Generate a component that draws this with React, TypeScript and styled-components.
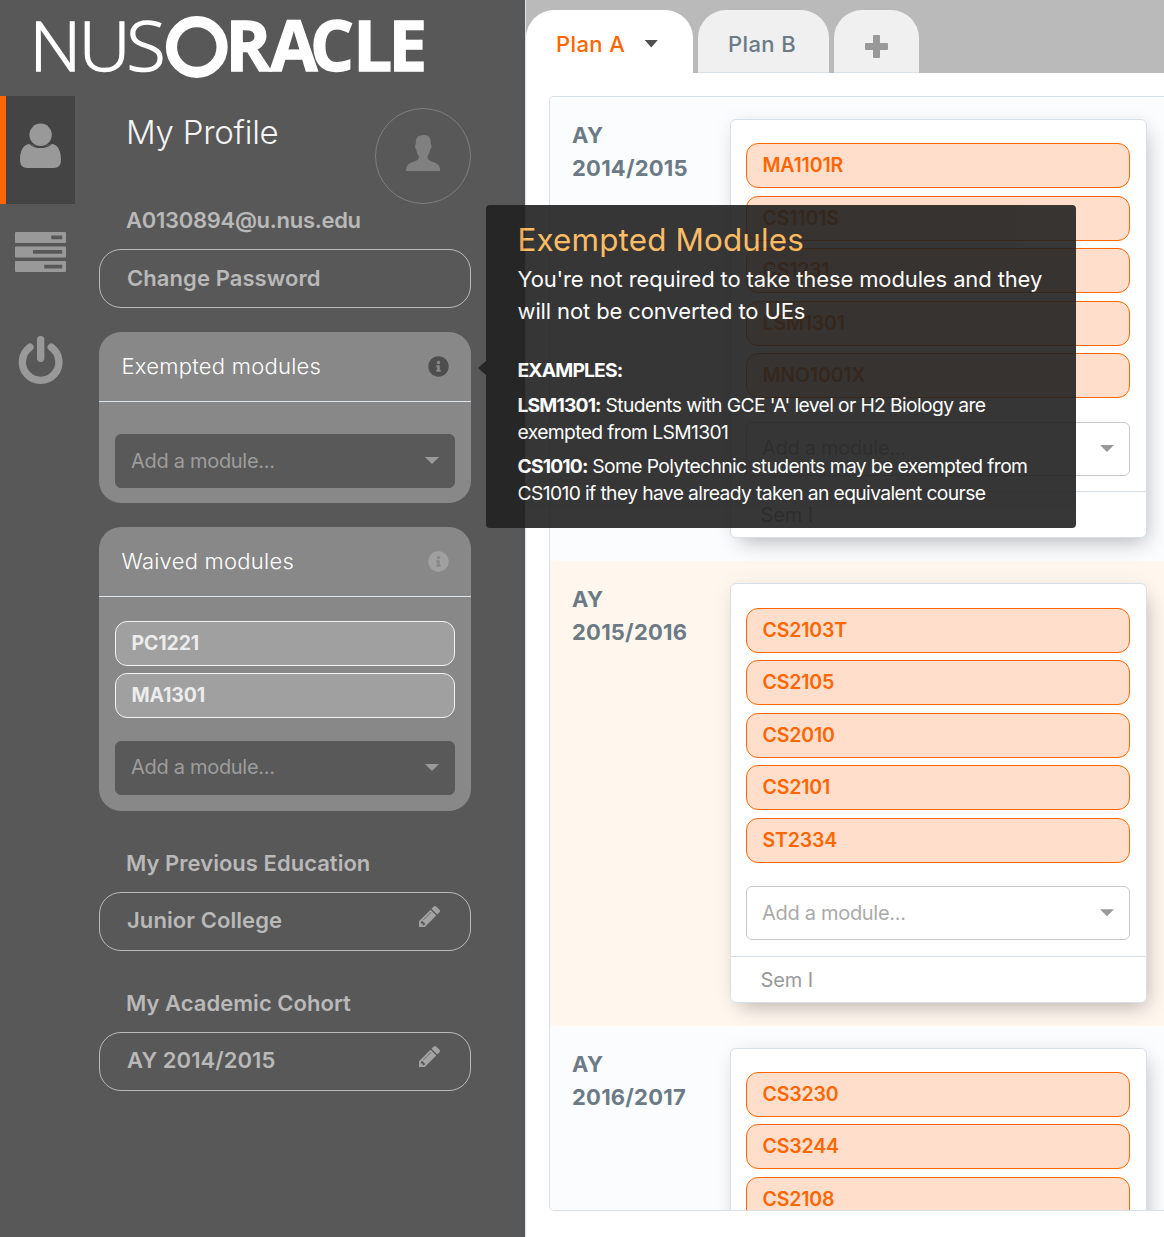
import React from "react";
import styled, { createGlobalStyle, css } from "styled-components";
import { FaInfoCircle } from "react-icons/fa";

const GlobalStyle = createGlobalStyle`
  *, *::before, *::after { box-sizing: border-box; }
  body {
    margin: 0;
    background: #fff;
    font-family: Inter, "Liberation Sans", sans-serif;
  }
`;

const Page = styled.div`
  display: flex;
  width: 100%;
  height: 1237px;
  overflow: hidden;
`;

/* ---------- sidebar ---------- */

const Sidebar = styled.aside`
  flex: 0 0 525px;
  background: #585858;
`;

const LogoBar = styled.header`
  height: 96px;

  svg { display: block; overflow: visible; }
  text { font-family: "Open Sans", "Noto Sans", sans-serif; font-size: 69px; }
`;

const SidebarBody = styled.div`
  display: flex;
`;

const Rail = styled.nav`
  display: flex;
  flex-direction: column;
  width: 75px;
`;

const RailItem = styled.a<{ $active?: boolean }>`
  display: flex;
  height: 108px;
  border-left: 6px solid ${(p) => (p.$active ? "#ff6600" : "transparent")};
  background: ${(p) => (p.$active ? "#444444" : "transparent")};
  color: #999999;

  svg { display: block; width: 69px; height: 108px; }
`;

const Profile = styled.section`
  width: 372px;
  margin-left: 24px;
  padding-top: 12px;
`;

const ProfileHead = styled.div`
  display: flex;
  justify-content: space-between;
  height: 96px;
  padding-left: 27px;
`;

const Title = styled.h1`
  margin: 0;
  font-size: 33px;
  font-weight: 300;
  line-height: 48px;
  letter-spacing: -0.25px;
  color: #f4f4f4;
`;

const Avatar = styled.div`
  width: 96px;
  height: 96px;
  border: 1px solid #7f7f7f;
  border-radius: 50%;
  color: #808080;

  svg { display: block; width: 94px; height: 94px; }
`;

const Label = styled.div<{ $spaced?: boolean; $tight?: boolean }>`
  margin: ${(p) => (p.$spaced ? "36px" : "0")} 0 13px;
  padding-left: 27px;
  font-size: 22px;
  font-weight: 600;
  line-height: 32px;
  letter-spacing: ${(p) => (p.$tight ? "-0.28px" : "0.03px")};
  color: #b9b9b9;
`;

const PillButton = styled.button`
  display: flex;
  align-items: center;
  justify-content: space-between;
  width: 100%;
  height: 59px;
  padding: 0 30px 2px 27px;
  border: 1px solid #bababa;
  border-radius: 22px;
  background: transparent;
  font: 600 22px Inter, "Liberation Sans", sans-serif;
  letter-spacing: 0.08px;
  color: #b9b9b9;

  svg { width: 21px; height: 21px; margin-bottom: 8px; color: #a3a3a3; }
`;

const Panel = styled.section<{ $short?: boolean }>`
  margin-top: 24px;
  padding-bottom: ${(p) => (p.$short ? "15px" : "16px")};
  border-radius: 22px;
  background: #888888;
`;

const PanelHead = styled.div<{ $active?: boolean }>`
  display: flex;
  align-items: center;
  justify-content: space-between;
  height: 70px;
  padding: 0 22px 1px 22.500px;
  border-bottom: 1px solid #dbe3ea;
  font-size: 22px;
  font-weight: 350;
  letter-spacing: 0.25px;
  color: #ffffff;

  svg { width: 21px; height: 21px; margin-top: 1px; color: ${(p) => (p.$active ? "#4e4e4e" : "#a0a0a0")}; }
`;

const PanelBody = styled.div<{ $filled?: boolean }>`
  padding: ${(p) => (p.$filled ? "23.9px" : "32px")} 16px 0;
`;

/* ---------- shared module controls ---------- */

const Chips = styled.div`
  display: flex;
  flex-direction: column;
  gap: 7.5px;
`;

const Chip = styled.div<{ $muted?: boolean }>`
  height: 45px;
  padding-left: 15.5px;
  border: 1px solid #ff6600;
  border-radius: 12px;
  background: #ffdfcc;
  font-size: 19.5px;
  font-weight: 600;
  line-height: 43px;
  letter-spacing: -0.15px;
  color: #ff6600;

  ${(p) =>
    p.$muted &&
    css`
      border-color: #f2f2f2;
      background: #a0a0a0;
      font-weight: 700;
      line-height: 42px;
      color: #ececec;
    `}
`;

const Select = styled.div<{ $dark?: boolean; $offset?: string }>`
  display: flex;
  align-items: center;
  justify-content: space-between;
  height: 54px;
  margin-top: ${(p) => p.$offset || "0"};
  padding: 0 15px 1px;
  border: 1px solid ${(p) => (p.$dark ? "#595959" : "#c8c8c8")};
  border-radius: 6px;
  background: ${(p) => (p.$dark ? "#595959" : "#ffffff")};
  font-size: 20px;
  font-weight: 400;
  letter-spacing: -0.3px;
  color: ${(p) => (p.$dark ? "#9d9d9d" : "#aaaaaa")};
`;

const Caret = styled.span<{ $dark?: boolean }>`
  width: 14px;
  height: 7px;
  background: ${(p) => (p.$dark ? "#4f4f4f" : "#999999")};
  clip-path: polygon(0 0, 100% 0, 50% 100%);
`;

/* ---------- planner ---------- */

const Main = styled.main`
  flex: 1;
  min-width: 0;
  border-left: 1px solid #dbe3e8;
  background: #ffffff;
`;

const TabBar = styled.div`
  display: flex;
  gap: 5px;
  height: 73px;
  padding-top: 10px;
  background: #bababa;
`;

const Tab = styled.div<{ $active?: boolean; $width: number }>`
  display: flex;
  align-items: center;
  gap: 19px;
  width: ${(p) => p.$width}px;
  padding: 5px 0 0 30px;
  border-bottom: 1px solid ${(p) => (p.$active ? "#ffffff" : "#d6e0e6")};
  border-radius: 28px 28px 0 0;
  background: ${(p) => (p.$active ? "#ffffff" : "#f0f0f0")};
  font-size: 22px;
  font-weight: 550;
  letter-spacing: 0.4px;
  color: ${(p) => (p.$active ? "#ff6600" : "#6b7a85")};

  svg { margin: 6px 0 0 0.5px; }
  span { height: 8px; }
`;

const Board = styled.div`
  height: 1115px;
  margin: 23px 0 0 23px;
  overflow: hidden;
  border: solid #d6e0e6;
  border-width: 1px 0 1px 1px;
  border-radius: 5px 0 0 5px;
`;

const YearRow = styled.div<{ $warm?: boolean }>`
  display: grid;
  grid-template-columns: 158px 417px;
  align-items: start;
  height: 464.4px;
  padding: 21.85px 0 0 22px;
  background: ${(p) => (p.$warm ? "#fff7ee" : "#fafcfe")};
`;

const Year = styled.h2`
  width: 120px;
  margin: 0;
  font-size: 22px;
  font-weight: 700;
  line-height: 33px;
  letter-spacing: 0.22px;
  color: #6b7a85;
`;

const Card = styled.div`
  height: 419.6px;
  padding: 23.3px 16px 0 15px;
  border: 1px solid #d6e0e6;
  border-radius: 6px;
  background: #ffffff;
  box-shadow: 0 0 20px rgba(0, 0, 0, 0.05), 5px 10px 20px -6px rgba(0, 0, 0, 0.24);
`;

const Semester = styled.div`
  height: 46px;
  margin: 15.4px -16px 0 -15px;
  padding-left: 29.5px;
  border-top: 1px solid #d6e0e6;
  font-size: 20px;
  font-weight: 400;
  line-height: 46px;
  letter-spacing: -0.1px;
  color: #999999;
`;

/* ---------- tooltip ---------- */

const Tooltip = styled.div`
  position: absolute;
  left: 486px;
  top: 205px;
  width: 590px;
  height: 323px;
  padding: 15px 31px 0 31.5px;
  border-radius: 4px;
  background: #212121;
  opacity: 0.9;
  color: #ffffff;

  &::before {
    content: "";
    position: absolute;
    left: -8px;
    top: 156px;
    border: solid transparent;
    border-width: 7px 8px 7px 0;
    border-right-color: #212121;
  }
`;

const TooltipTitle = styled.h3`
  margin: 0 0 3px;
  font-size: 31.4px;
  font-weight: 400;
  line-height: 40px;
  letter-spacing: 0.15px;
  color: #fcb655;
`;

const Lead = styled.p`
  margin: 0 0 30px;
  font-size: 22px;
  line-height: 32px;
  letter-spacing: -0.12px;
  white-space: nowrap;
`;

const Example = styled.p`
  margin: 0 0 7.5px;
  font-size: 19.3px;
  line-height: 27px;
  letter-spacing: -0.62px;
  white-space: nowrap;

  b { letter-spacing: -0.85px; }
`;

/* ---------- drawings ---------- */

const Logo = () => (
  <svg width="525" height="96" fill="#ffffff" stroke="#ffffff" aria-label="NUSOracle">
    <text x="28.3 75.7 121.600" y="71" fontWeight="300" strokeWidth="1.4" transform="scale(1.04 1)">NUS</text>
    <circle cx="196.8" cy="47" r="25.3" fill="none" strokeWidth="11.2" />
    <text x="225.5 270 310 353.2 388.600" y="71" fontWeight="700" strokeWidth="1.3">RACLE</text>
  </svg>
);

const PersonIcon = () => (
  <svg viewBox="6 96 69 108" fill="currentColor">
    <circle cx="40.6" cy="134.8" r="11.2" />
    <path d="M20 160C20 150.500 23.500 144 30 144C33.500 144 34.500 148 40.600 148C46.700 148 47.700 144 51.200 144C57.700 144 61 150.500 61 160C61 165 58.500 168 53.500 168H27.500C22.500 168 20 165 20 160Z" />
    <path d="M29.500 143C33 149 48 149 51.700 143" fill="none" stroke="#444444" strokeWidth="1.200" />
  </svg>
);

const TasksIcon = () => (
  <svg viewBox="6 204 69 108" fill="currentColor" fillRule="evenodd">
    <path d="M16 232h49q1 0 1 1v9q0 1-1 1h-49q-1 0-1-1v-9q0-1 1-1zM51.300 235.500v3.700h10.900v-3.700z" />
    <path d="M16 246.500h49q1 0 1 1v9q0 1-1 1h-49q-1 0-1-1v-9q0-1 1-1zM33 250v3.700h29.200v-3.700z" />
    <path d="M16 261h49q1 0 1 1v9q0 1-1 1h-49q-1 0-1-1v-9q0-1 1-1zM44.200 264.700v3.700h18v-3.700z" />
  </svg>
);

const PowerIcon = () => (
  <svg viewBox="6 312 69 108" fill="none" stroke="currentColor" strokeWidth="7.400" strokeLinecap="round">
    <path d="M30 347.200A18.300 18.300 0 1 0 51.300 347.200M40.650 339.700V358.300" />
  </svg>
);

const AvatarIcon = () => (
  <svg viewBox="376 109 94 94" fill="currentColor">
    <path d="M423.500 135C428.500 134.500 431 137.500 430.800 144C432 144.500 431.600 148.500 430.300 149.500C429.800 152.500 428.500 154.500 427.600 156C427.300 159.500 428.500 160.300 433 162C438.500 164 440.200 166 440.200 171H406C406.200 166 407.500 164 413 162C417.800 160.300 419 159.500 418.800 156C417.600 154.500 416.700 152.500 416.300 149.500C415 148.500 414.700 144.500 415.900 144C415.500 138 417.500 135.200 423.500 135Z" />
  </svg>
);

const PencilIcon = () => (
  <svg viewBox="0 21 1515 1515" fill="currentColor">
    <path d="M363 1408l91-91-235-235-91 91v107h128v128h107zM886 480q0-22-22-22-10 0-17 7l-542 542q-7 7-7 17 0 22 22 22 10 0 17-7l542-542q7-7 7-17zM832 288l416 416-832 832H0v-416zM1515 384q0 53-37 90l-166 166-416-416 166-165q36-38 90-38 53 0 91 38l235 234q37 39 37 91z" />
  </svg>
);

const PlusIcon = () => (
  <svg width="23" height="23" viewBox="0 0 23 23" fill="#999999">
    <path d="M9 0h5q1 0 1 1v7h7q1 0 1 1v5q0 1-1 1h-7v7q0 1-1 1h-5q-1 0-1-1v-7h-7q-1 0-1-1v-5q0-1 1-1h7v-7q0-1 1-1z" />
  </svg>
);

/* ---------- data ---------- */

const years = [
  { year: "2014/2015", modules: ["MA1101R", "CS1101S", "CS1231", "LSM1301", "MNO1001X"] },
  { year: "2015/2016", modules: ["CS2103T", "CS2105", "CS2010", "CS2101", "ST2334"] },
  { year: "2016/2017", modules: ["CS3230", "CS3244", "CS2108"], cut: true },
];

export default function App() {
  return (
    <Page>
      <GlobalStyle />
      <Sidebar>
        <LogoBar><Logo /></LogoBar>
        <SidebarBody>
          <Rail>
            <RailItem $active><PersonIcon /></RailItem>
            <RailItem><TasksIcon /></RailItem>
            <RailItem><PowerIcon /></RailItem>
          </Rail>
          <Profile>
            <ProfileHead>
              <Title>My Profile</Title>
              <Avatar><AvatarIcon /></Avatar>
            </ProfileHead>
            <Label $tight>A0130894@u.nus.edu</Label>
            <PillButton>Change Password</PillButton>

            <Panel $short>
              <PanelHead $active>Exempted modules<FaInfoCircle /></PanelHead>
              <PanelBody>
                <Select $dark>Add a module...<Caret /></Select>
              </PanelBody>
            </Panel>

            <Panel>
              <PanelHead>Waived modules<FaInfoCircle /></PanelHead>
              <PanelBody $filled>
                <Chips>
                  <Chip $muted>PC1221</Chip>
                  <Chip $muted>MA1301</Chip>
                </Chips>
                <Select $dark $offset="22.6px">Add a module...<Caret /></Select>
              </PanelBody>
            </Panel>

            <Label $spaced>My Previous Education</Label>
            <PillButton>Junior College<PencilIcon /></PillButton>
            <Label $spaced>My Academic Cohort</Label>
            <PillButton>AY 2014/2015<PencilIcon /></PillButton>
          </Profile>
        </SidebarBody>
      </Sidebar>

      <Main>
        <TabBar>
          <Tab $active $width={167}>Plan A<Caret $dark /></Tab>
          <Tab $width={131}>Plan B</Tab>
          <Tab $width={85}><PlusIcon /></Tab>
        </TabBar>
        <Board>
          {years.map((y, i) => (
            <YearRow key={y.year} $warm={i % 2 === 1}>
              <Year>AY {y.year}</Year>
              <Card>
                <Chips>
                  {y.modules.map((m) => <Chip key={m}>{m}</Chip>)}
                </Chips>
                {!y.cut && (
                  <>
                    <Select $offset="23.8px">Add a module...<Caret /></Select>
                    <Semester>Sem I</Semester>
                  </>
                )}
              </Card>
            </YearRow>
          ))}
        </Board>
      </Main>

      <Tooltip role="tooltip">
        <TooltipTitle>Exempted Modules</TooltipTitle>
        <Lead>You're not required to take these modules and they<br />will not be converted to UEs</Lead>
        <Example><b>EXAMPLES:</b></Example>
        <Example><b>LSM1301:</b> Students with GCE 'A' level or H2 Biology are<br />exempted from LSM1301</Example>
        <Example><b>CS1010:</b> Some Polytechnic students may be exempted from<br />CS1010 if they have already taken an equivalent course</Example>
      </Tooltip>
    </Page>
  );
}
